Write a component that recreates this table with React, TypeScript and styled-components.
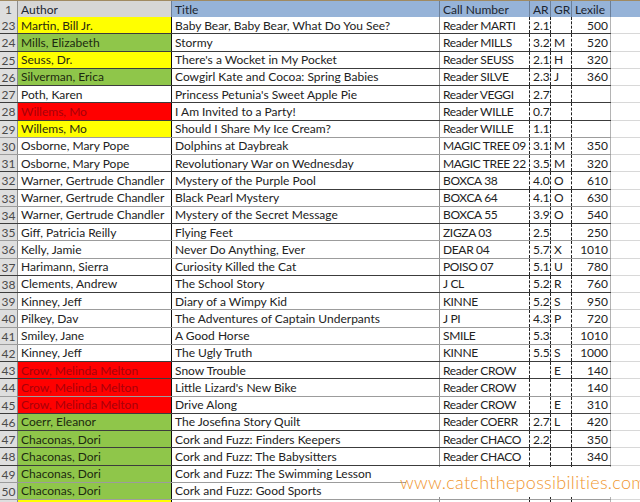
import styled, { createGlobalStyle } from 'styled-components';

const GlobalStyle = createGlobalStyle`
  html, body {
    margin: 0;
    padding: 0;
    background: #fff;
  }
  body {
    font-family: Lato, 'Open Sans', sans-serif;
  }
`;

type Fill = 'yellow' | 'green' | 'red' | 'none';

type Book = [number, string, string, string, string, string, string, Fill, boolean?];

// row, author, title, call number, AR, GR, lexile, author fill, dark bottom line
const books: Book[] = [
  [23, 'Martin, Bill Jr.', 'Baby Bear, Baby Bear, What Do You See?', 'Reader MARTI', '2.1', '', '500', 'yellow', true],
  [24, 'Mills, Elizabeth', 'Stormy', 'Reader MILLS', '3.2', 'M', '520', 'green', true],
  [25, 'Seuss, Dr.', "There's a Wocket in My Pocket", 'Reader SEUSS', '2.1', 'H', '320', 'yellow', true],
  [26, 'Silverman, Erica', 'Cowgirl Kate and Cocoa: Spring Babies', 'Reader SILVE', '2.3', 'J', '360', 'green', true],
  [27, 'Poth, Karen', "Princess Petunia's Sweet Apple Pie", 'Reader VEGGI', '2.7', '', '', 'none', true],
  [28, 'Willems, Mo', 'I Am Invited to a Party!', 'Reader WILLE', '0.7', '', '', 'red', true],
  [29, 'Willems, Mo', 'Should I Share My Ice Cream?', 'Reader WILLE', '1.1', '', '', 'yellow', false],
  [30, 'Osborne, Mary Pope', 'Dolphins at Daybreak', 'MAGIC TREE 09', '3.1', 'M', '350', 'none', false],
  [31, 'Osborne, Mary Pope', 'Revolutionary War on Wednesday', 'MAGIC TREE 22', '3.5', 'M', '320', 'none', true],
  [32, 'Warner, Gertrude Chandler', 'Mystery of the Purple Pool', 'BOXCA 38', '4.0', 'O', '610', 'none', true],
  [33, 'Warner, Gertrude Chandler', 'Black Pearl Mystery', 'BOXCA 64', '4.1', 'O', '630', 'none', false],
  [34, 'Warner, Gertrude Chandler', 'Mystery of the Secret Message', 'BOXCA 55', '3.9', 'O', '540', 'none', true],
  [35, 'Giff, Patricia Reilly', 'Flying Feet', 'ZIGZA 03', '2.5', '', '250', 'none', false],
  [36, 'Kelly, Jamie', 'Never Do Anything, Ever', 'DEAR 04', '5.7', 'X', '1010', 'none', false],
  [37, 'Harimann, Sierra', 'Curiosity Killed the Cat', 'POISO 07', '5.1', 'U', '780', 'none', true],
  [38, 'Clements, Andrew', 'The School Story', 'J CL', '5.2', 'R', '760', 'none', true],
  [39, 'Kinney, Jeff', 'Diary of a Wimpy Kid', 'KINNE', '5.2', 'S', '950', 'none', false],
  [40, 'Pilkey, Dav', 'The Adventures of Captain Underpants', 'J PI', '4.3', 'P', '720', 'none', false],
  [41, 'Smiley, Jane', 'A Good Horse', 'SMILE', '5.3', '', '1010', 'none', false],
  [42, 'Kinney, Jeff', 'The Ugly Truth', 'KINNE', '5.5', 'S', '1000', 'none', true],
  [43, 'Crow, Melinda Melton', 'Snow Trouble', 'Reader CROW', '', 'E', '140', 'red', true],
  [44, 'Crow, Melinda Melton', "Little Lizard's New Bike", 'Reader CROW', '', '', '140', 'red', false],
  [45, 'Crow, Melinda Melton', 'Drive Along', 'Reader CROW', '', 'E', '310', 'red', true],
  [46, 'Coerr, Eleanor', 'The Josefina Story Quilt', 'Reader COERR', '2.7', 'L', '420', 'green', true],
  [47, 'Chaconas, Dori', 'Cork and Fuzz: Finders Keepers', 'Reader CHACO', '2.2', '', '350', 'green', true],
  [48, 'Chaconas, Dori', 'Cork and Fuzz: The Babysitters', 'Reader CHACO', '', '', '340', 'green', true],
  [49, 'Chaconas, Dori', 'Cork and Fuzz: The Swimming Lesson', '', '', '', '', 'green', false],
  [50, 'Chaconas, Dori', 'Cork and Fuzz: Good Sports', '', '', '', '', 'green', false],
  [51, '', '', '', '', '', '', 'yellow', false],
];

const fills: Record<Fill, string> = {
  yellow: '#ffff00',
  green: '#8fc64a',
  red: '#ff0000',
  none: '#ffffff',
};

const inks: Record<Fill, string> = {
  yellow: '#2a2a10',
  green: '#1d2a10',
  red: '#a8000a',
  none: '#222',
};

const Page = styled.div`
  position: relative;
  width: 640px;
  height: 502px;
  overflow: hidden;
  background: #fff;
`;

const Row = styled.div<{ $dark?: boolean }>`
  display: grid;
  grid-template-columns: 18px 154px 268px 90px 21px 21px 39px 1fr;
  height: 17.25px;
  border-bottom: 1px solid ${(p) => (p.$dark ? '#3c3c3c' : '#9c9c9c')};
  box-sizing: border-box;
`;

const HeaderRow = styled(Row)`
  height: 17px;
  border-top: 1px solid #a08a62;
  border-bottom: 1px solid #5a6f8a;
`;

type Edge = 'solid' | 'black' | 'dashed' | 'light' | 'none';

const edges: Record<Edge, string> = {
  solid: '1px solid #8e8e8e',
  black: '1px solid #111',
  dashed: '1px dashed #222',
  light: '1px solid #b4b4b4',
  none: '0',
};

const Cell = styled.div<{ $bg?: string; $ink?: string; $right?: Edge; $num?: boolean; $tight?: boolean }>`
  display: flex;
  align-items: center;
  justify-content: ${(p) => (p.$num ? 'flex-end' : 'flex-start')};
  padding: 1px ${(p) => (p.$num ? '2px' : '0')} 0 ${(p) => (p.$num ? '0' : '3px')};
  background: ${(p) => p.$bg ?? 'transparent'};
  color: ${(p) => p.$ink ?? '#222'};
  border-right: ${(p) => edges[p.$right ?? 'none']};
  font-size: 12px;
  letter-spacing: ${(p) => (p.$tight ? '-0.35px' : 'normal')};
  line-height: 1;
  white-space: nowrap;
  overflow: hidden;
  box-sizing: border-box;
`;

const RowNumber = styled.div`
  display: flex;
  align-items: center;
  justify-content: center;
  padding-top: 1px;
  background: #dedede;
  color: #4a4a4a;
  font-size: 12px;
  border-right: 1px solid #8c8c8c;
`;

const HeadCell = styled(Cell)<{ $grey?: boolean }>`
  background: ${(p) => (p.$grey ? '#d6d6d6' : '#96b3d8')};
  color: #1c2530;
  border-right-color: #6b7f99;
`;

const Filler = styled.div`
  border-bottom: 1px solid #d8d8d8;
  margin-bottom: -1px;
  background: #fff;
`;

const Watermark = styled.div`
  position: absolute;
  left: 406px;
  top: 467px;
  width: 234px;
  height: 30px;
  background: #fff;
  display: flex;
  align-items: center;
  justify-content: center;
  color: #f0962e;
  font-family: Lato, 'Open Sans', sans-serif;
  font-weight: 300;
  font-size: 18px;
  letter-spacing: 0.3px;
`;

function BookRow({ book }: { book: Book }) {
  const [n, author, title, call, ar, gr, lexile, fill, dark] = book;
  return (
    <Row $dark={dark}>
      <RowNumber>{n}</RowNumber>
      <Cell $bg={fills[fill]} $ink={inks[fill]} $right="black">
        {author}
      </Cell>
      <Cell $right="solid">{title}</Cell>
      <Cell $right="dashed" $tight>
        {call}
      </Cell>
      <Cell $right="dashed">{ar}</Cell>
      <Cell $right="dashed">{gr}</Cell>
      <Cell $right="light" $num>
        {lexile}
      </Cell>
      <Filler />
    </Row>
  );
}

export default function App() {
  return (
    <Page>
      <GlobalStyle />
      <HeaderRow>
        <RowNumber>1</RowNumber>
        <HeadCell $grey $right="black">
          Author
        </HeadCell>
        <HeadCell $right="solid">Title</HeadCell>
        <HeadCell $right="solid">Call Number</HeadCell>
        <HeadCell $right="solid">AR</HeadCell>
        <HeadCell $right="solid">GR</HeadCell>
        <HeadCell $right="solid">Lexile</HeadCell>
        <HeadCell />
      </HeaderRow>
      {books.map((b) => (
        <BookRow key={b[0]} book={b} />
      ))}
      <Watermark>www.catchthepossibilities.com</Watermark>
    </Page>
  );
}
